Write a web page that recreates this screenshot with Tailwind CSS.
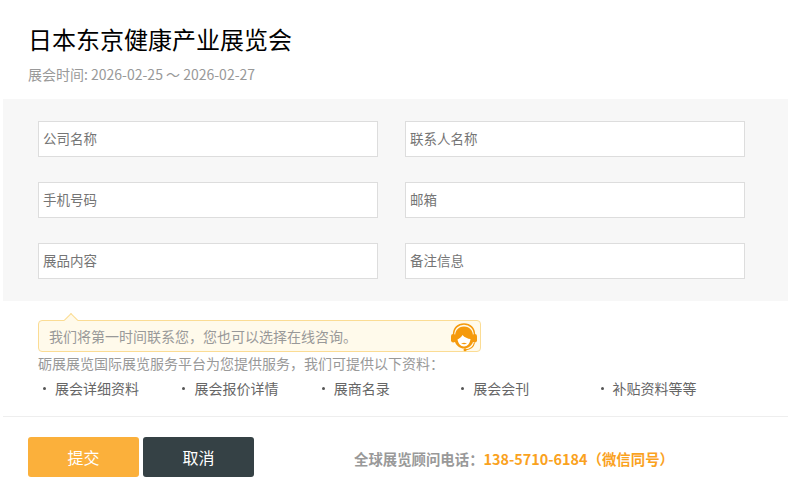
<!DOCTYPE html>
<html lang="zh-CN">
  <head>
    <meta charset="UTF-8" />
    <script src="https://cdn.jsdelivr.net/npm/@tailwindcss/browser@4"></script>
    <title>日本东京健康产业展览会</title>
  </head>
  <body class="bg-white h-[502px] w-[788px] overflow-hidden font-['Noto_Sans_CJK_SC','Noto_Sans',sans-serif]">
    <div class="pl-[28px] pt-[22px] h-[99px]">
      <h1 class="text-[24px] leading-[34px] text-black">日本东京健康产业展览会</h1>
      <p class="text-[14px] leading-[20px] mt-[8px] text-[#999]">展会时间: 2026-02-25 ～ 2026-02-27</p>
    </div>

    <form class="ml-[3px] h-[202px] bg-[#f7f7f7] pl-[35px] pt-[22px] grid grid-cols-[340px_340px] gap-x-[27px] gap-y-[25px] content-start">
      <input class="h-[36px] w-[340px] bg-white border border-[#ddd] pl-[4px] pb-[2px] text-[13.500px] placeholder:text-[#757575]" placeholder="公司名称" />
      <input class="h-[36px] w-[340px] bg-white border border-[#ddd] pl-[4px] pb-[2px] text-[13.500px] placeholder:text-[#757575]" placeholder="联系人名称" />
      <input class="h-[36px] w-[340px] bg-white border border-[#ddd] pl-[4px] pb-[2px] text-[13.500px] placeholder:text-[#757575]" placeholder="手机号码" />
      <input class="h-[36px] w-[340px] bg-white border border-[#ddd] pl-[4px] pb-[2px] text-[13.500px] placeholder:text-[#757575]" placeholder="邮箱" />
      <input class="h-[36px] w-[340px] bg-white border border-[#ddd] pl-[4px] pb-[2px] text-[13.500px] placeholder:text-[#757575]" placeholder="展品内容" />
      <input class="h-[36px] w-[340px] bg-white border border-[#ddd] pl-[4px] pb-[2px] text-[13.500px] placeholder:text-[#757575]" placeholder="备注信息" />
    </form>

    <div class="pl-[38px] pt-[19px]">
      <div class="relative w-[443px] h-[32px] bg-[#fffaeb] border border-[#fbdc94] rounded-[4px] pl-[10px] flex items-center text-[14px] text-[#999]">
        <span class="absolute left-[27px] top-[-6px] w-[10px] h-[10px] rotate-45 bg-[#fffaeb] border-l border-t border-[#fbdc94]"></span>
        <span class="relative">我们将第一时间联系您，您也可以选择在线咨询。</span>
        <svg class="absolute right-[2px] top-[2px]" width="28" height="29" viewBox="0 0 28 29">
          <path d="M3.500 12C3.500 5 8 1 14 1S24.500 5 24.500 12" fill="none" stroke="#f59a0c" stroke-width="1.500" />
          <path d="M14 3.500C8 3.500 5 8 5 13V19C6.500 23 10 25.500 14 25.500S21.500 23 23 19V13C23 8 20 3.500 14 3.500Z" fill="#f59a0c" />
          <rect x="1" y="11" width="4.500" height="8.500" rx="2.200" fill="#f59a0c" />
          <rect x="22.500" y="11" width="4.500" height="8.500" rx="2.200" fill="#f59a0c" />
          <path d="M7.500 16.500C9 15.500 11.500 14 12.500 12C14.500 14.500 18 15.800 20.500 16C20 20.500 17.500 23.500 14 23.500S8.300 20.500 7.500 16.500Z" fill="#fff" />
          <path d="M11 20.500C13 21.600 15.500 21.600 17 20.500L14 19.800Z" fill="#f59a0c" />
          <path d="M24.500 19.500C23.500 24.500 20 26.500 15.500 26.800" fill="none" stroke="#f59a0c" stroke-width="1.200" />
          <circle cx="15" cy="26.800" r="1.500" fill="#f59a0c" />
        </svg>
      </div>
      <p class="text-[14px] leading-[20px] mt-[1px] text-[#999]">砺展展览国际展览服务平台为您提供服务，我们可提供以下资料：</p>
      <ul class="flex mt-[5px] text-[14px] leading-[20px] text-[#666]">
        <li class="w-[139.400px] pl-[17px] relative"><span class="absolute left-[5px] top-[9px] w-[3px] h-[3px] rounded-full bg-[#555]"></span>展会详细资料</li>
        <li class="w-[139.400px] pl-[17px] relative"><span class="absolute left-[5px] top-[9px] w-[3px] h-[3px] rounded-full bg-[#555]"></span>展会报价详情</li>
        <li class="w-[139.400px] pl-[17px] relative"><span class="absolute left-[5px] top-[9px] w-[3px] h-[3px] rounded-full bg-[#555]"></span>展商名录</li>
        <li class="w-[139.400px] pl-[17px] relative"><span class="absolute left-[5px] top-[9px] w-[3px] h-[3px] rounded-full bg-[#555]"></span>展会会刊</li>
        <li class="w-[139.400px] pl-[17px] relative"><span class="absolute left-[5px] top-[9px] w-[3px] h-[3px] rounded-full bg-[#555]"></span>补贴资料等等</li>
      </ul>
    </div>

    <div class="ml-[3px] mt-[18px] border-t border-[#eee] pl-[25px] pt-[20px] flex items-center">
      <button class="w-[111px] h-[40px] bg-[#fbb03b] text-white text-[16px] rounded-[3px]">提交</button>
      <button class="w-[111px] h-[40px] ml-[4px] bg-[#354145] text-white text-[16px] rounded-[3px]">取消</button>
      <p class="ml-[100px] mt-[4px] text-[14.400px] font-bold text-[#999]">全球展览顾问电话：<span class="text-[#faa21e]">138-5710-6184（微信同号）</span></p>
    </div>
  </body>
</html>
